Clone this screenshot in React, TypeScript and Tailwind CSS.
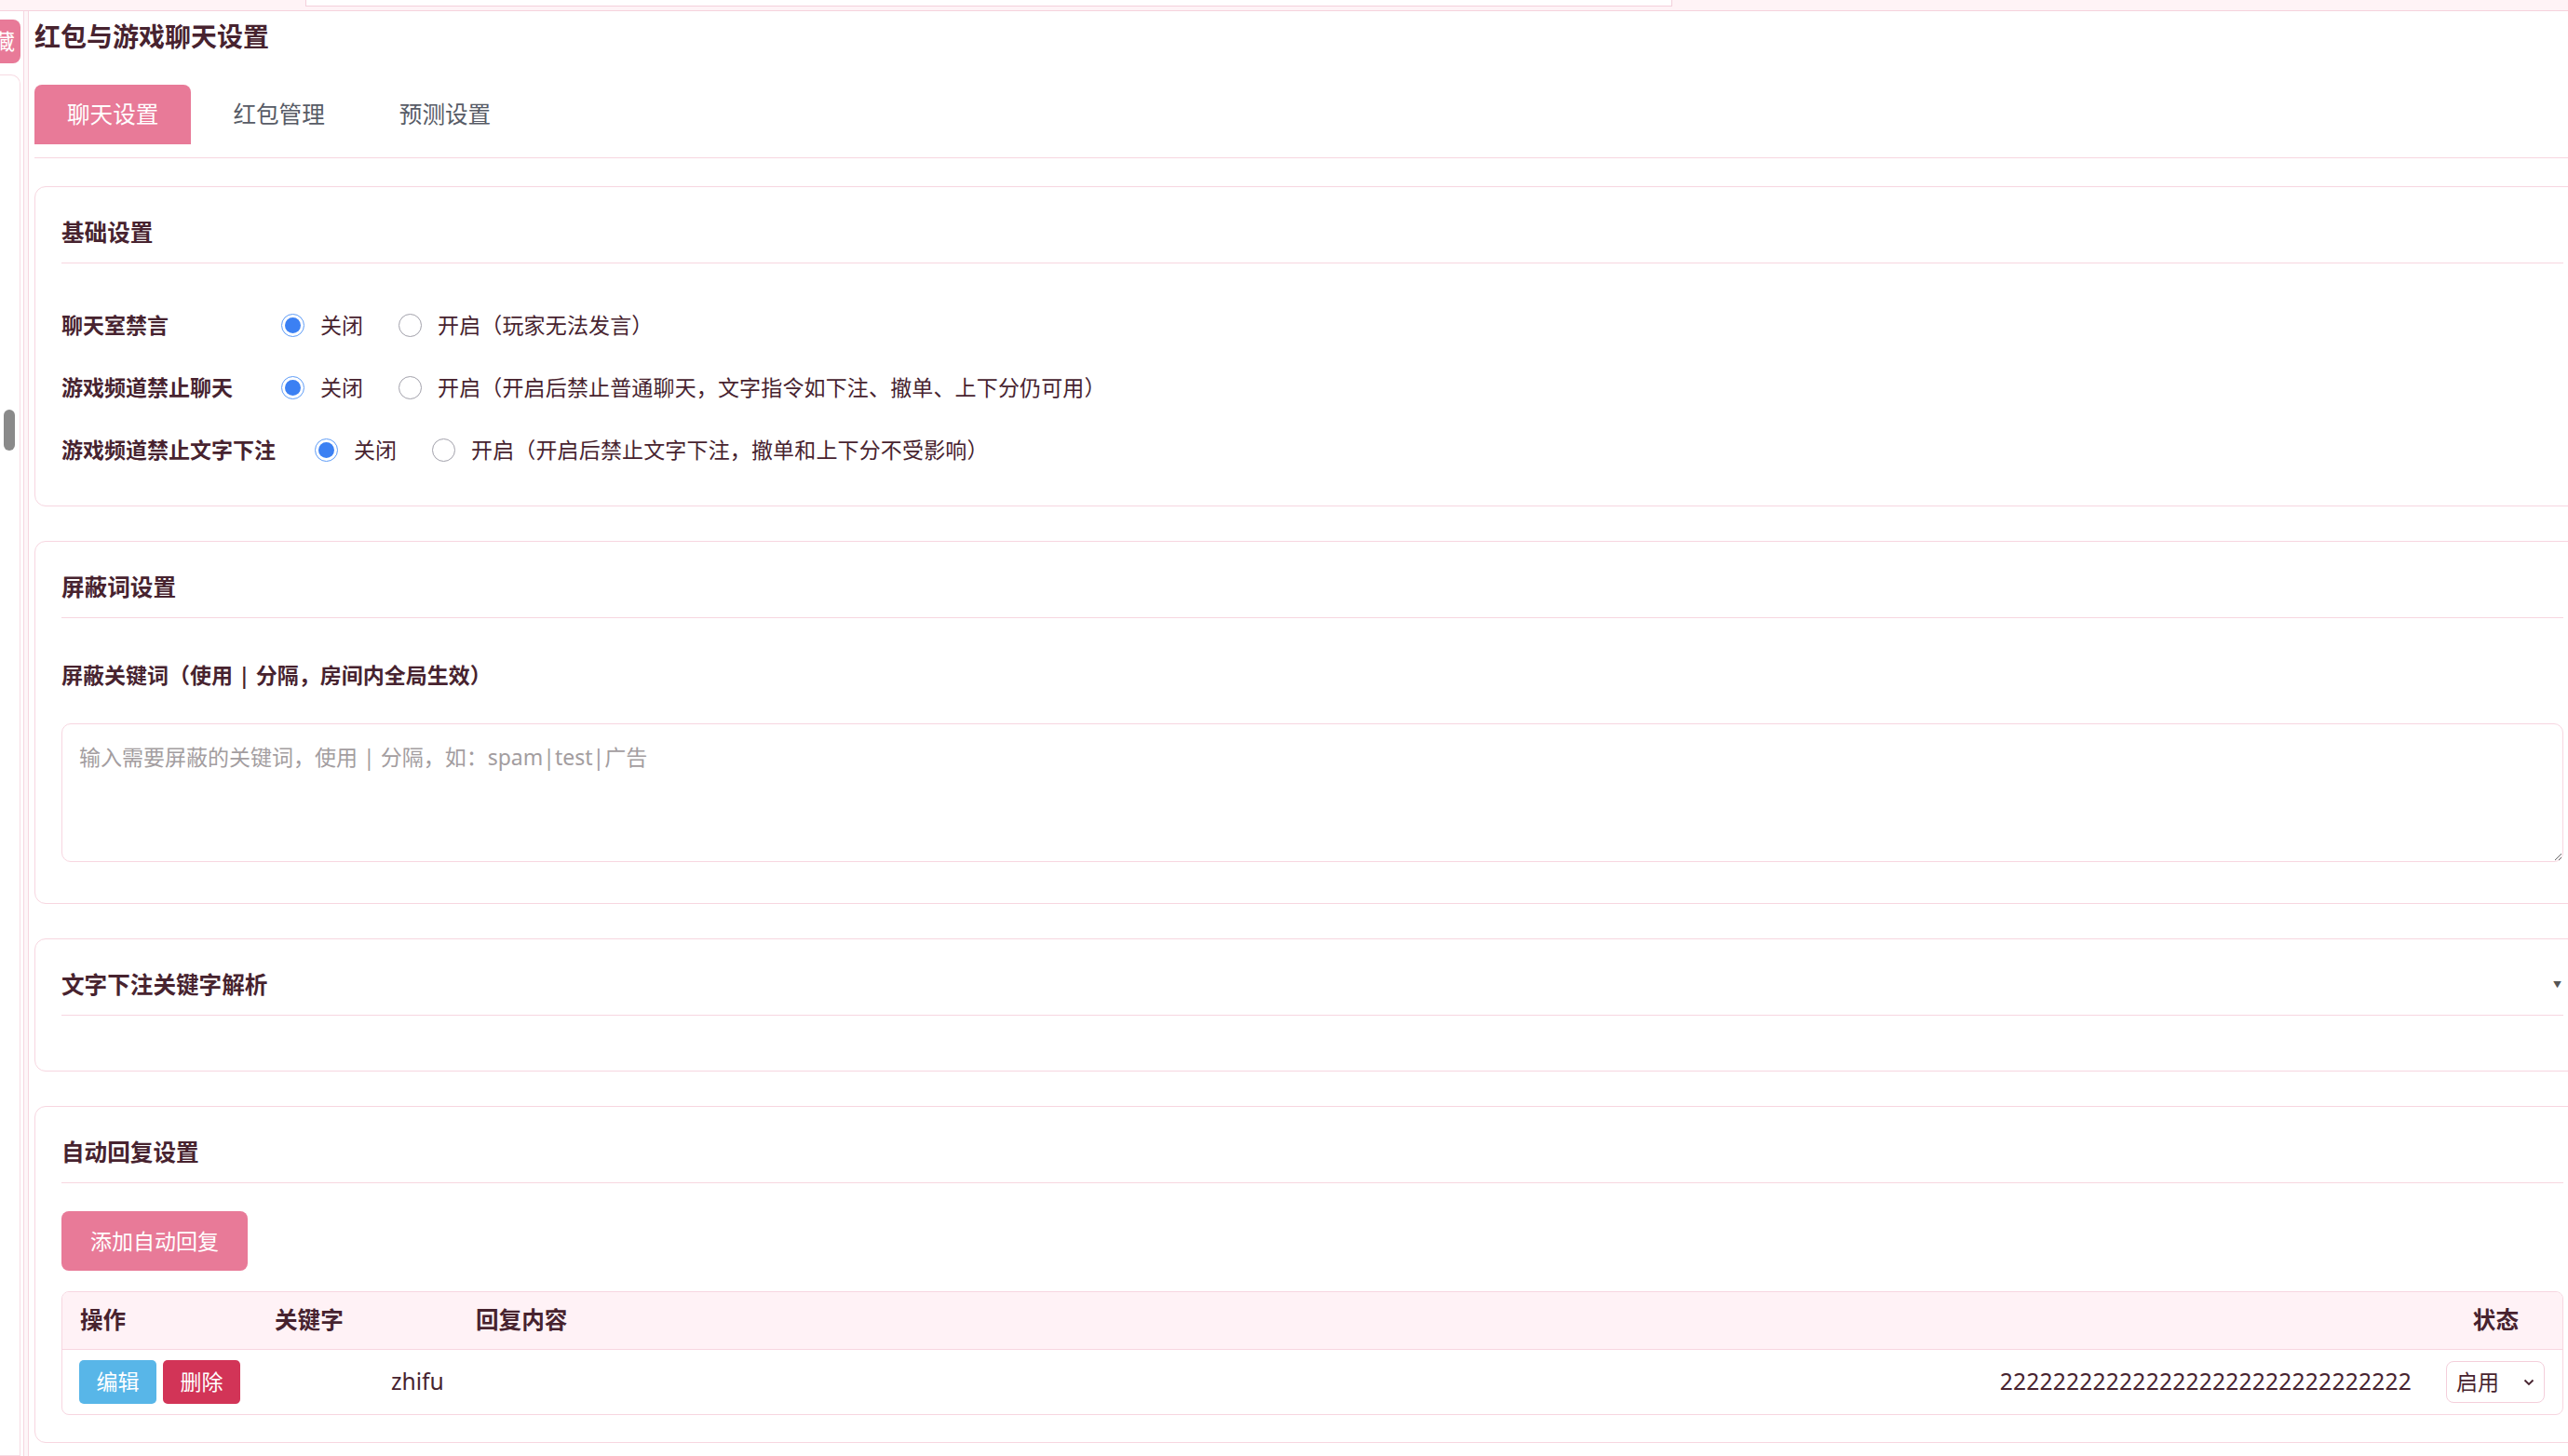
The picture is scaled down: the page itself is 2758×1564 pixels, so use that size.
import React from 'react';

const pink = 'bg-[#e87a98]';

const Radio: React.FC<{ on?: boolean }> = ({ on }) =>
    on ? (
        <span className="flex w-[25px] h-[25px] shrink-0 rounded-full border-[1.5px] border-[#5e9cf7] items-center justify-center">
            <span className="block w-[17px] h-[17px] rounded-full bg-[#3b80f3]" />
        </span>
    ) : (
        <span className="block w-[25px] h-[25px] shrink-0 rounded-full border-[1.5px] border-[#a2a1ab]" />
    );

const SwitchRow: React.FC<{ label: string; hint: string }> = ({ label, hint }) => (
    <div className="flex items-center h-[67px] text-[23px]">
        <span className="min-w-[194px] mr-[42px] font-semibold whitespace-nowrap">{label}</span>
        <Radio on />
        <span className="ml-[17px]">关闭</span>
        <span className="ml-[38px] flex"><Radio /></span>
        <span className="ml-[17px] whitespace-nowrap tracking-[0.15px]">{hint}</span>
    </div>
);

const Card: React.FC<{ title: string; extra?: React.ReactNode; children?: React.ReactNode }> = ({ title, extra, children }) => (
    <section className="mb-[37px] border border-[#f7d6e0] rounded-[12px] bg-white px-[28px] pt-[31px] pb-[29px]">
        <div className="flex items-center justify-between pb-[14px] mb-[30px] border-b border-[#f7d6e0]">
            <h2 className="text-[24.6px] leading-[36px] font-bold">{title}</h2>
            {extra}
        </div>
        {children}
    </section>
);

export default function App() {
    return (
        <div className="w-[2758px] h-[1564px] overflow-hidden bg-[#fdf6f8] text-[#47232f] font-['Noto_Sans','Noto_Sans_CJK_SC',sans-serif]">
            {/* top strip */}
            <div className="h-[12px] bg-[#fff3f6] border-b border-[#f5d2dd]">
                <div className="ml-[328px] w-[1468px] h-[7px] bg-white border-x border-b border-[#f3d0db]" />
            </div>

            <div className="flex h-[1552px]">
                {/* collapsed sidebar */}
                <aside className="w-[26px] shrink-0 bg-white border-r border-[#f6d6e0] flex flex-col">
                    <button className={`mt-[9px] h-[47px] w-[22px] ${pink} rounded-r-[8px] overflow-hidden flex items-center justify-end pr-[6px] text-white text-[23px] whitespace-nowrap`}>
                        隐藏
                    </button>
                    <div className="mt-[12px] w-[22px] flex-1 border border-l-0 border-[#f7dbe3] rounded-tr-[10px] bg-white pt-[359px]">
                        <div className="ml-[4px] w-[12px] h-[44px] rounded-full bg-[#8a8a8a]" />
                    </div>
                </aside>

                {/* main panel */}
                <main className="ml-[4px] bg-white border-l border-[#f6d6e0] pl-[6px] pt-[7px]">
                    <div className="w-[2745px]">
                        <h1 className="text-[28px] leading-[40px] font-bold mb-[32px]">红包与游戏聊天设置</h1>

                        <div className="flex gap-[10px] pb-[14px] border-b border-[#f7d6e0] text-[24.6px]">
                            <button className={`h-[64px] px-[35px] rounded-t-[8px] ${pink} text-white`}>聊天设置</button>
                            <button className="h-[64px] px-[35px] text-[#575b66]">红包管理</button>
                            <button className="h-[64px] px-[35px] text-[#575b66]">预测设置</button>
                        </div>

                        <div className="mt-[30px]">
                            <Card title="基础设置">
                                <div className="pt-[3px] -mb-[3px]">
                                    <SwitchRow label="聊天室禁言" hint="开启（玩家无法发言）" />
                                    <SwitchRow label="游戏频道禁止聊天" hint="开启（开启后禁止普通聊天，文字指令如下注、撤单、上下分仍可用）" />
                                    <SwitchRow label="游戏频道禁止文字下注" hint="开启（开启后禁止文字下注，撤单和上下分不受影响）" />
                                </div>
                            </Card>

                            <Card title="屏蔽词设置">
                                <div className="pt-[14px]">
                                    <p className="mb-[34px] text-[23px] leading-[35px] font-semibold">屏蔽关键词（使用 | 分隔，房间内全局生效）</p>
                                    <textarea
                                        className="block w-full h-[149px] mb-[15px] border border-[#f7d6e0] rounded-[10px] p-[18px] text-[23px] leading-[35px] outline-none placeholder:text-[#a39da0]"
                                        placeholder="输入需要屏蔽的关键词，使用 | 分隔，如：spam|test|广告"
                                    />
                                </div>
                            </Card>

                            <Card title="文字下注关键字解析" extra={<span className="text-[9px] text-[#555] mr-[2px]">▼</span>} />

                            <Card title="自动回复设置">
                                <button className={`h-[64px] px-[31px] rounded-[8px] ${pink} text-white text-[23px]`}>添加自动回复</button>

                                <div className="mt-[22px] border border-[#f7d6e0] rounded-[8px] overflow-hidden text-[24.6px]">
                                    <div className="flex items-center h-[62px] bg-[#fff2f6] border-b border-[#f7d6e0] font-bold">
                                        <span className="w-[209px] pl-[19px]">操作</span>
                                        <span className="w-[216px] pl-[19px]">关键字</span>
                                        <span className="flex-1 pl-[19px]">回复内容</span>
                                        <span className="pr-[47px]">状态</span>
                                    </div>
                                    <div className="flex items-center h-[69px]">
                                        <div className="w-[335px] pl-[18px] flex gap-[7px] text-[23px] text-white">
                                            <button className="w-[83px] h-[47px] rounded-[5px] bg-[#58b6e8]">编辑</button>
                                            <button className="w-[83px] h-[47px] rounded-[5px] bg-[#d23457]">删除</button>
                                        </div>
                                        <span className="pl-[18px]">zhifu</span>
                                        <span className="flex-1 text-right tracking-[0.2px]">2222222222222222222222222222222</span>
                                        <div className="pl-[37px] pr-[19px]">
                                            <div className="w-[106px] h-[45px] border border-[#f4cfdb] rounded-[8px] px-[10px] flex items-center justify-between text-[23px]">
                                                <span>启用</span>
                                                <svg width="12" height="8" viewBox="0 0 12 8" fill="none" stroke="#47232f" strokeWidth="1.8">
                                                    <path d="M1.5 1.5 6 6l4.5-4.5" />
                                                </svg>
                                            </div>
                                        </div>
                                    </div>
                                </div>
                            </Card>
                        </div>
                    </div>
                </main>
            </div>
        </div>
    );
}
